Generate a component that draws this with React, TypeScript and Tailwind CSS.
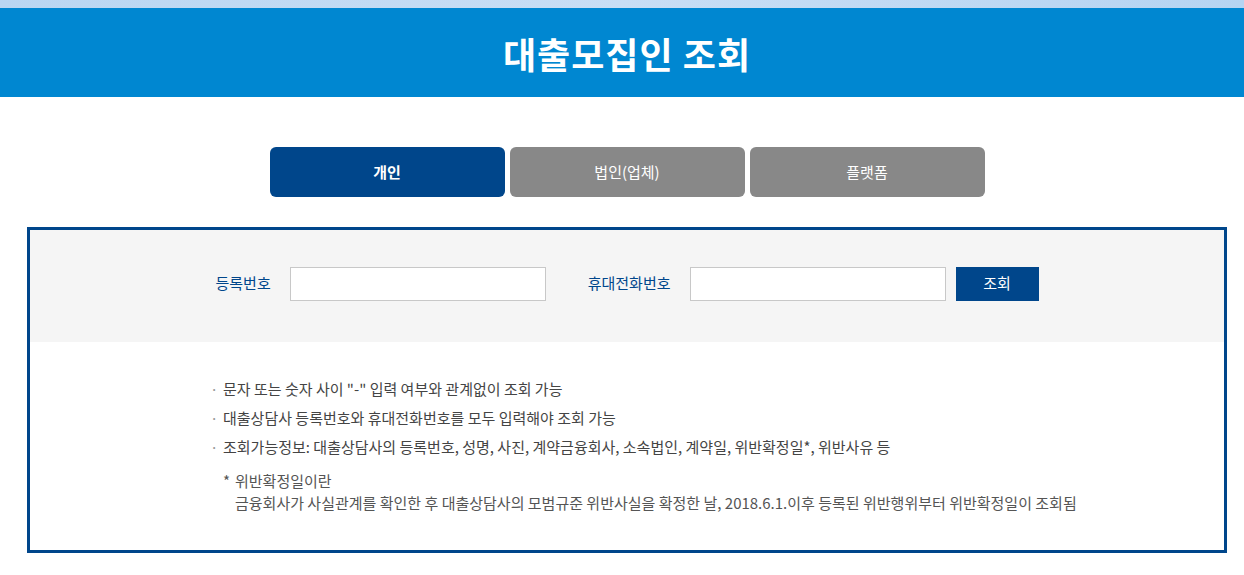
import React from "react"

const font = { fontFamily: '"Noto Sans CJK KR", "Noto Sans", sans-serif' }

const tabs = [
  { label: "개인", active: true },
  { label: "법인(업체)", active: false },
  { label: "플랫폼", active: false },
]

const notices = [
  '문자 또는 숫자 사이 "-" 입력 여부와 관계없이 조회 가능',
  "대출상담사 등록번호와 휴대전화번호를 모두 입력해야 조회 가능",
  "조회가능정보: 대출상담사의 등록번호, 성명, 사진, 계약금융회사, 소속법인, 계약일, 위반확정일*, 위반사유 등",
]

export default function App() {
  return (
    <div className="min-h-screen bg-white" style={font}>
      <div className="h-[8px] bg-gradient-to-r from-[#b9d6f2] via-[#c8def5] to-[#b5d4f2]" />
      <header className="h-[89px] bg-[#0087d1] flex items-center justify-center pl-[10px]">
        <h1 className="text-[36px] font-bold text-white tracking-[1px] leading-none">대출모집인 조회</h1>
      </header>

      <div className="pl-[10px]">
        <div className="mt-[50px] flex justify-center gap-[5px]">
          {tabs.map((t) => (
            <button
              key={t.label}
              className={
                t.active
                  ? "w-[235px] h-[50px] rounded-[6px] bg-[#00468b] text-white text-[15px] font-bold"
                  : "w-[235px] h-[50px] rounded-[6px] bg-[#888888] text-white text-[15px]"
              }
            >
              {t.label}
            </button>
          ))}
        </div>

        <div className="mx-auto mt-[30px] w-[1200px] h-[326px] border-[3px] border-[#00468b]">
          <div className="h-[112px] bg-[#f5f5f5] flex items-center justify-center pb-[5px]">
            <label className="text-[15px] text-[#00468b] mr-[19px]">등록번호</label>
            <input className="w-[256px] h-[34px] bg-white border border-[#c8c8c8] outline-none" />
            <label className="ml-[42px] text-[15px] text-[#00468b] mr-[19px]">휴대전화번호</label>
            <input className="w-[256px] h-[34px] bg-white border border-[#c8c8c8] outline-none" />
            <button className="ml-[10px] w-[83px] h-[34px] bg-[#00468b] text-white text-[15px]">조회</button>
          </div>

          <div className="pl-[180px] pt-[37px] text-[15px] text-[#444]">
            <ul className="flex flex-col gap-[9px]">
              {notices.map((n) => (
                <li key={n} className="flex items-center h-[20px]">
                  <span className="w-[13px] text-[#999]">·</span>
                  <span>{n}</span>
                </li>
              ))}
            </ul>
            <div className="mt-[13px] ml-[13px] grid grid-cols-[12px_1fr] text-[#555] leading-[22px]">
              <span>*</span>
              <p>위반확정일이란</p>
              <span />
              <p>
                금융회사가 사실관계를 확인한 후 대출상담사의 모범규준 위반사실을 확정한 날, 2018.6.1.이후 등록된 위반행위부터 위반확정일이 조회됨
              </p>
            </div>
          </div>
        </div>
      </div>
    </div>
  )
}
